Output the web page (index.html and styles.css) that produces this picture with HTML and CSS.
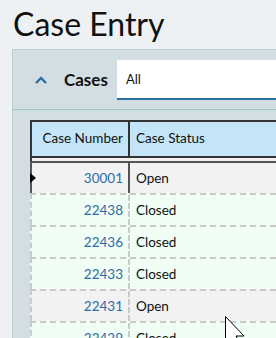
FILE: index.html
```html
<!DOCTYPE html>
<html lang="en">
<head>
  <meta charset="UTF-8" />
  <title>Case Entry</title>
  <link rel="stylesheet" href="styles.css">
</head>
<body>
  <h1 class="page-title">Case Entry</h1>

  <section class="panel">
    <div class="panel-header">
      <span class="toggle">
        <svg width="14" height="10" viewBox="0 0 14 10"><path d="M2 8 L7 3 L12 8" fill="none" stroke="#2b6fa3" stroke-width="2.4"/></svg>
      </span>
      <span class="panel-title">Cases</span>
      <div class="filter">All</div>
    </div>

    <div class="grid-wrap">
      <div class="grid">
        <div class="grid-head">
          <div class="cell num">Case Number</div>
          <div class="cell">Case Status</div>
        </div>
        <div class="grid-body">
          <div class="row current">
            <span class="marker"></span>
            <div class="cell num">30001</div>
            <div class="cell">Open</div>
          </div>
          <div class="row">
            <div class="cell num">22438</div>
            <div class="cell">Closed</div>
          </div>
          <div class="row">
            <div class="cell num">22436</div>
            <div class="cell">Closed</div>
          </div>
          <div class="row">
            <div class="cell num">22433</div>
            <div class="cell">Closed</div>
          </div>
          <div class="row alt">
            <div class="cell num">22431</div>
            <div class="cell">Open</div>
          </div>
          <div class="row">
            <div class="cell num">22429</div>
            <div class="cell">Closed</div>
          </div>
        </div>
      </div>
    </div>
  </section>

  <svg class="pointer" width="30" height="30" viewBox="0 0 30 30">
    <path d="M0.5 0.5 L0.5 28 L7 22 L11 30 L15 28 L11 20 L19 20 Z" fill="#fff" stroke="#000" stroke-width="1"/>
  </svg>
</body>
</html>
```

FILE: styles.css
```css
body {
  margin: 0;
  background-color: #edf1f4;
  font-family: Lato, "Noto Sans", sans-serif;
  width: 276px;
  height: 338px;
  overflow: hidden;
  position: relative;
}

.page-title {
  margin: 0;
  padding: 4px 0 0 13px;
  height: 45px;
  font-size: 32px;
  font-weight: 400;
  line-height: 40px;
  color: #111;
}

.panel {
  margin-left: 12px;
  background-color: #d3dee3;
  border-left: 1px solid #c2cdd2;
  border-top: 1px solid #c2cdd2;
  height: 300px;
}

.panel-header {
  display: flex;
  align-items: center;
  height: 59px;
  border-bottom: 1px solid #9fc4d0;
}

.toggle {
  display: flex;
  margin-left: 21px;
  width: 14px;
}

.panel-title {
  margin-left: 16px;
  font-size: 17px;
  font-weight: 700;
  color: #111;
  width: 53px;
}

.filter {
  flex: 1;
  height: 38px;
  background-color: #fff;
  border-bottom: 2px solid #2a6fa0;
  font-size: 13px;
  line-height: 38px;
  padding-left: 9px;
  color: #111;
}

.grid-wrap {
  padding: 10px 0 0 17px;
}

.grid {
  background-color: #f2f2f2;
  border-left: 2px solid #333;
  border-top: 2px solid #333;
}

.grid-head,
.row {
  display: grid;
  grid-template-columns: 98px 1fr;
}

.grid-head {
  height: 34px;
  background-color: #c3e5f7;
  border-bottom: 2px solid #333;
  font-size: 14px;
  color: #111;
}

.grid-head .cell {
  line-height: 33px;
}

.grid-head .cell.num {
  border-right: 2px solid #333;
}

.grid-body {
  padding-top: 3px;
}

.cell {
  padding: 0 6px;
  font-size: 13.5px;
  white-space: nowrap;
}

.cell.num {
  text-align: right;
  padding-right: 5px;
}

.row {
  position: relative;
  height: 30px;
  background-color: #effdf5;
  border-top: 2px dashed #c9c9c9;
  margin-left: -2px;
  border-left: 2px dashed #c9c9c9;
}

.row .cell {
  line-height: 30px;
  color: #111;
}

.row .cell.num {
  color: #2e6da4;
  border-right: 2px dashed #c9c9c9;
}

.row.current {
  background-color: #f2f2f2;
  border-top: 2px solid #555;
  border-left: 2px solid #555;
}

.row.current .cell.num {
  border-right: 2px solid #555;
}

.row.alt {
  background-color: #f2f2f2;
}

.marker {
  position: absolute;
  left: -2px;
  top: 10px;
  width: 0;
  height: 0;
  border-top: 5px solid transparent;
  border-bottom: 5px solid transparent;
  border-left: 6px solid #000;
}

.pointer {
  position: absolute;
  left: 225px;
  top: 316px;
}
```
